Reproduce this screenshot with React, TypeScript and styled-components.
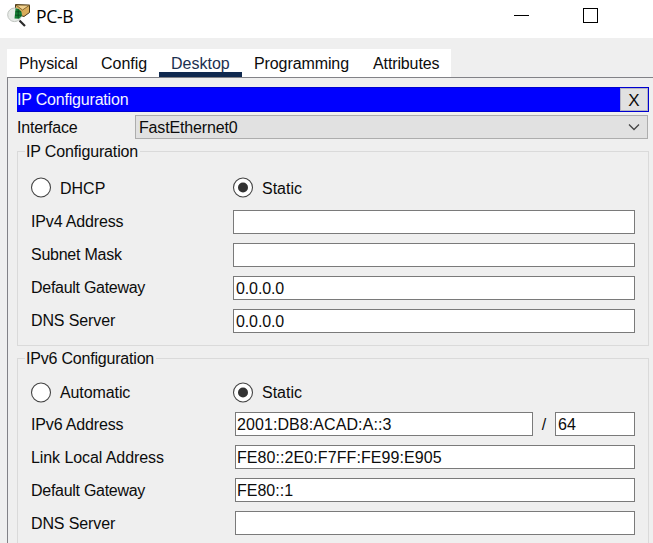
import React from 'react';
import styled, { createGlobalStyle } from 'styled-components';

const Global = createGlobalStyle`
  *, *::before, *::after { box-sizing: border-box; }
  html, body { margin: 0; padding: 0; overflow: hidden; }
`;

const Window = styled.div`
  width: 653px;
  height: 543px;
  overflow: hidden;
  display: flex;
  flex-direction: column;
  background: #efefef;
  color: #0c0c0c;
  font: 16px/20px 'Liberation Sans', Arial, sans-serif;
  white-space: nowrap;
`;

const Text = styled.span<{ $ls?: number }>`
  letter-spacing: ${(p) => p.$ls ?? 0}px;
`;

const TitleBar = styled.header`
  height: 38px;
  flex: none;
  display: flex;
  align-items: flex-start;
  padding-left: 6px;
  background: #fff;
`;

const AppIcon = styled.svg`
  width: 26px;
  height: 28px;
`;

const Title = styled.h1`
  margin: 4px 0 0 4px;
  flex: 1;
  font: 400 17.5px/24px 'Open Sans', 'Noto Sans', sans-serif;
  letter-spacing: -0.3px;
  color: #000;
`;

const Controls = styled.svg`
  width: 139px;
  height: 38px;
`;

const Tabs = styled.nav`
  display: flex;
  width: 444px;
  height: 28px;
  flex: none;
  margin: 11px 0 0 7px;
  background: #fff;
`;

const Tab = styled.div<{ $w: number; $active?: boolean }>`
  width: ${(p) => p.$w}px;
  padding: 5px 0 0 12px;
  line-height: 20px;
  color: ${(p) => (p.$active ? '#1c3050' : '#0c0c0c')};
  border-bottom: 5px solid ${(p) => (p.$active ? '#10294f' : 'transparent')};
`;

const Panel = styled.main`
  flex: 1;
  margin-left: 7px;
  padding: 9px 4px 0 9px;
  border-top: 1px solid #828287;
  border-left: 1px solid #828287;
`;

const Heading = styled.div`
  display: flex;
  justify-content: space-between;
  height: 25px;
  border: 1px solid #0000d0;
  border-left: 0;
  background: #0000ff;
  color: #f4f4ff;
  line-height: 24px;
`;

const CloseButton = styled.button`
  width: 28px;
  height: 23px;
  padding: 0;
  border: 1px solid #b4b4c4;
  background: #e1e1e1;
  color: #0c0c0c;
  font: 17px/23px 'Liberation Sans', Arial, sans-serif;
`;

const InterfaceRow = styled.div`
  display: flex;
  align-items: center;
  height: 24px;
  margin: 3px 1px 0 0;
`;

const InterfaceLabel = styled.div`
  width: 118px;
  padding-top: 1px;
`;

const Select = styled.div`
  flex: 1;
  display: flex;
  align-items: center;
  justify-content: space-between;
  height: 24px;
  padding: 1px 7px 0 3px;
  border: 1px solid #adadad;
  background: #e1e1e1;
`;

const Chevron = styled.svg`
  width: 12px;
  height: 8px;
  margin-top: -2px;
`;

const Group = styled.section<{ $h: number; $gap: number }>`
  height: ${(p) => p.$h}px;
  margin-top: ${(p) => p.$gap}px;
  border: 1px solid #dadada;
`;

const Legend = styled.div`
  width: fit-content;
  height: 20px;
  margin: -10px 0 0 7px;
  padding: 0 2px 0 1px;
  background: #efefef;
`;

const RadioRow = styled.div<{ $top: number; $line: number }>`
  display: flex;
  margin: ${(p) => p.$top}px 0 0 12px;
  line-height: ${(p) => p.$line}px;
`;

const RadioOption = styled.label<{ $w?: number }>`
  display: flex;
  gap: 8px;
  width: ${(p) => (p.$w ? `${p.$w}px` : 'auto')};
  height: 22px;
`;

const RadioIcon = styled.svg`
  width: 22px;
  height: 22px;
`;

const Fields = styled.div<{ $top: number; $labels: number; $shift?: number }>`
  display: grid;
  grid-template-columns: ${(p) => p.$labels}px 1fr;
  row-gap: 9px;
  margin: ${(p) => p.$top}px 13px 0 13px;

  & > label {
    padding-top: ${(p) => p.$shift ?? 0}px;
  }
`;

const Label = styled.label`
  height: 24px;
  line-height: 23px;
`;

const FieldLine = styled.div`
  display: flex;
  height: 24px;
`;

const Box = styled.div<{ $w?: number; $pad?: number }>`
  width: ${(p) => (p.$w ? `${p.$w}px` : '100%')};
  height: 24px;
  padding-left: ${(p) => p.$pad ?? 2}px;
  border: 1px solid #7a7a7a;
  background: #fff;
  line-height: 23px;
`;

const Slash = styled.div`
  width: 22px;
  line-height: 26px;
  text-align: center;
`;

function Radio({ label, checked, w, ls }: { label: string; checked?: boolean; w?: number; ls?: number }) {
  return (
    <RadioOption $w={w}>
      <RadioIcon viewBox="0 0 22 22">
        <circle cx="11" cy="10.5" r="9.5" fill="#fff" stroke="#444" strokeWidth="1.1" />
        {checked && <circle cx="11" cy="10.5" r="5" fill="#333" />}
      </RadioIcon>
      <Text $ls={ls}>{label}</Text>
    </RadioOption>
  );
}

interface FieldProps {
  label: string;
  value?: string;
  ls?: number;
  vls?: number;
  pad?: number;
}

function Field({ label, value, ls, vls, pad }: FieldProps) {
  return (
    <>
      <Label><Text $ls={ls}>{label}</Text></Label>
      <Box $pad={pad}><Text $ls={vls}>{value}</Text></Box>
    </>
  );
}

export default function App() {
  return (
    <Window>
      <Global />
      <TitleBar>
        <AppIcon viewBox="0 0 26 28">
          <path d="M9.5 4.5 23.5 5.2 23.5 12.5 18 16.5 9.5 14Z" fill="#d9ac5a" stroke="#4a3a1c" strokeWidth="1" />
          <path d="M10 5 16.5 10 23.5 5.2Z" fill="#f0cf8c" stroke="#6b5223" strokeWidth="0.8" />
          <circle cx="8.5" cy="14.8" r="6.8" fill="#e8ebe8" stroke="#bfc4bf" />
          <path d="M9.5 8.5C13 8.4 16.5 11 15.8 16L13 18.8 8.5 18.4Z" fill="#158034" />
          <path d="M9.5 11.8h5.8M9 15.2h6.6M12.2 9v9.2" stroke="#083f19" strokeWidth="0.7" />
          <path d="M13.5 20.5 19 26" stroke="#2b2b2b" strokeWidth="2.2" />
        </AppIcon>
        <Title>PC-B</Title>
        <Controls viewBox="0 0 139 38" shapeRendering="crispEdges">
          <path d="M0 15.5h15" stroke="#000" />
          <rect x="69.5" y="8.5" width="14" height="14" fill="none" stroke="#000" />
        </Controls>
      </TitleBar>
      <Tabs>
        <Tab $w={82}><Text $ls={-0.12}>Physical</Text></Tab>
        <Tab $w={70}><Text>Config</Text></Tab>
        <Tab $w={83} $active><Text>Desktop</Text></Tab>
        <Tab $w={119}><Text $ls={-0.1}>Programming</Text></Tab>
        <Tab $w={90}><Text $ls={-0.12}>Attributes</Text></Tab>
      </Tabs>
      <Panel>
        <Heading>
          <Text $ls={-0.19}>IP Configuration</Text>
          <CloseButton>X</CloseButton>
        </Heading>
        <InterfaceRow>
          <InterfaceLabel><Text $ls={-0.2}>Interface</Text></InterfaceLabel>
          <Select>
            <Text $ls={-0.16}>FastEthernet0</Text>
            <Chevron viewBox="0 0 12 8">
              <path d="M1 1.5 6 6.5 11 1.5" fill="none" stroke="#444" strokeWidth="1.3" />
            </Chevron>
          </Select>
        </InterfaceRow>
        <Group $h={195} $gap={12}>
          <Legend><Text $ls={-0.15}>IP Configuration</Text></Legend>
          <RadioRow $top={15} $line={24}>
            <Radio label="DHCP" w={202} />
            <Radio label="Static" checked />
          </RadioRow>
          <Fields $top={11} $labels={202}>
            <Field label="IPv4 Address" ls={-0.16} />
            <Field label="Subnet Mask" ls={-0.25} />
            <Field label="Default Gateway" ls={-0.28} value="0.0.0.0" vls={-0.12} />
            <Field label="DNS Server" ls={-0.12} value="0.0.0.0" vls={-0.12} />
          </Fields>
        </Group>
        <Group $h={210} $gap={12}>
          <Legend><Text $ls={-0.2}>IPv6 Configuration</Text></Legend>
          <RadioRow $top={13} $line={22}>
            <Radio label="Automatic" w={202} ls={-0.1} />
            <Radio label="Static" checked />
          </RadioRow>
          <Fields $top={8} $labels={204} $shift={1}>
            <Label><Text $ls={-0.16}>IPv6 Address</Text></Label>
            <FieldLine>
              <Box $w={298} $pad={1}><Text $ls={0.08}>2001:DB8:ACAD:A::3</Text></Box>
              <Slash>/</Slash>
              <Box $w={80}><Text>64</Text></Box>
            </FieldLine>
            <Field label="Link Local Address" ls={-0.08} value="FE80::2E0:F7FF:FE99:E905" vls={0.08} pad={1} />
            <Field label="Default Gateway" ls={-0.28} value="FE80::1" pad={1} />
            <Field label="DNS Server" ls={-0.12} />
          </Fields>
        </Group>
      </Panel>
    </Window>
  );
}
